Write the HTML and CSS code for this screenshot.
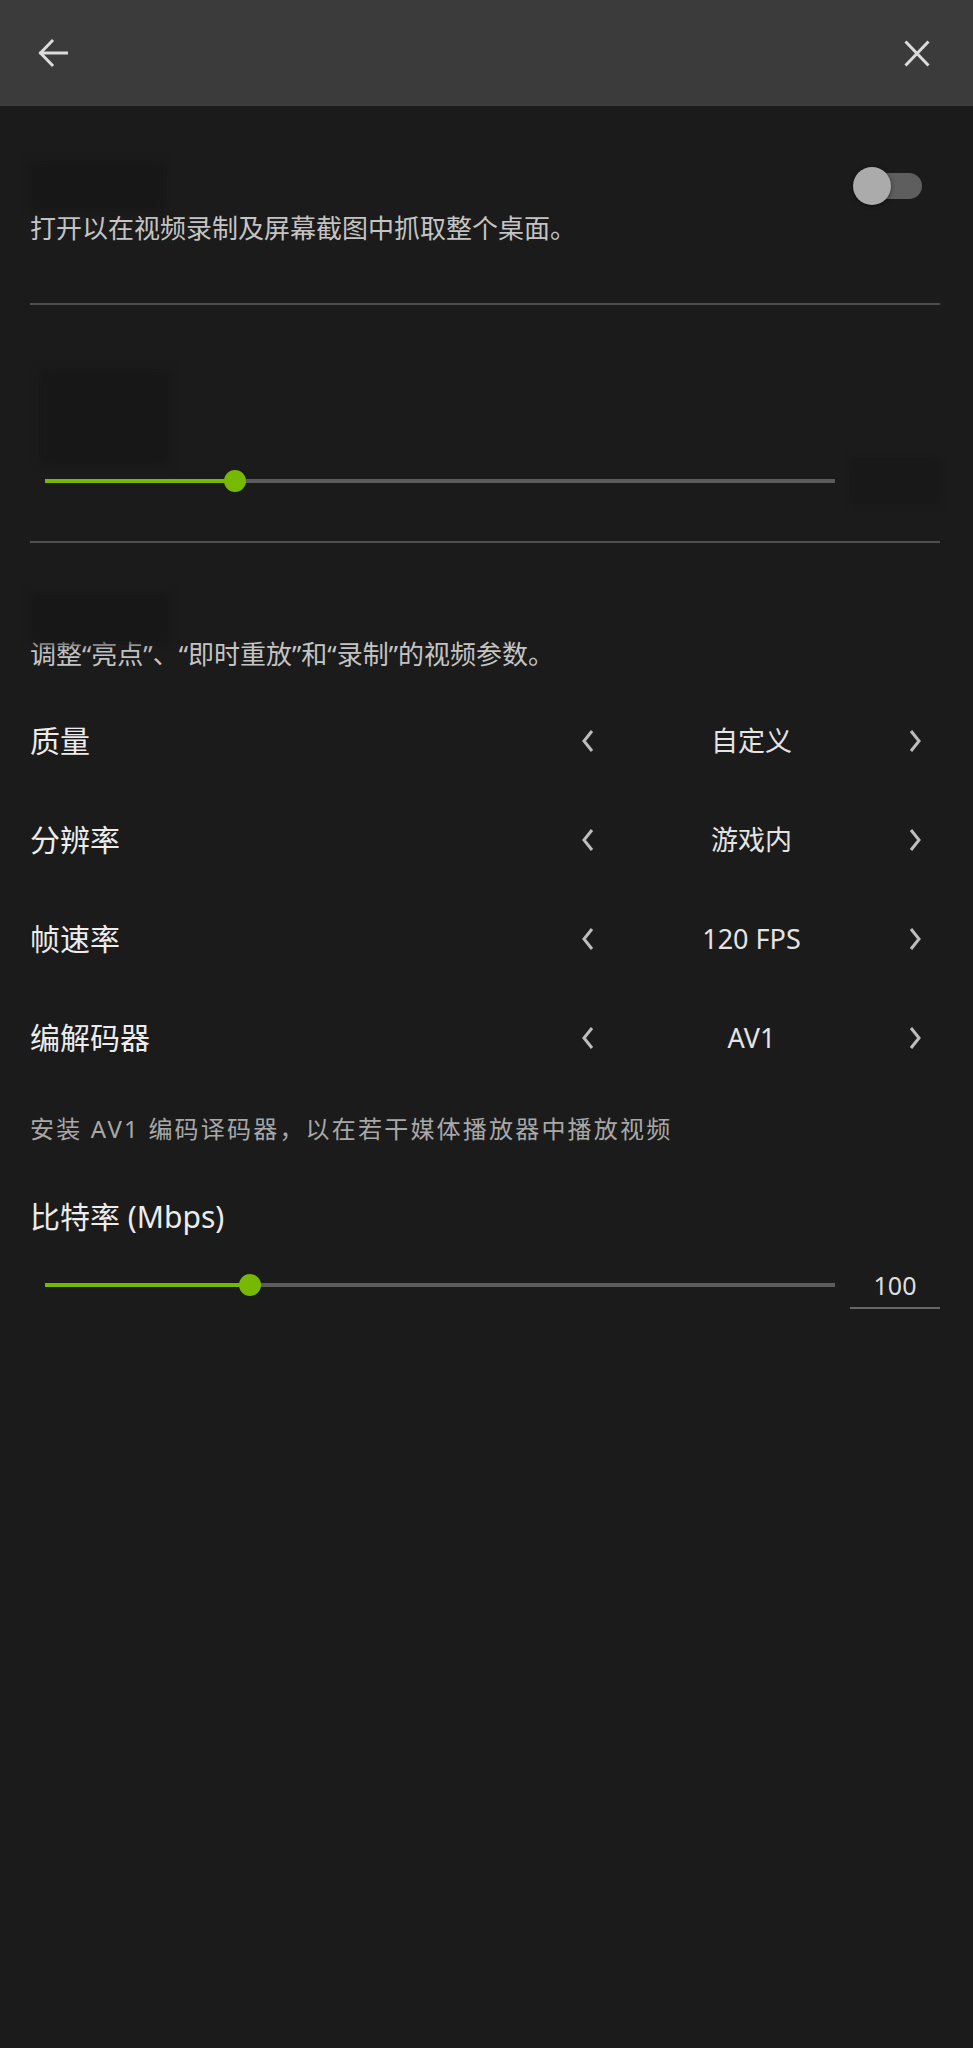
FILE: index.html
```html
<!DOCTYPE html>
<html lang="zh-CN">
  <head>
    <meta charset="UTF-8" />
    <meta name="viewport" content="width=device-width, initial-scale=1.0" />
    <title>视频捕获</title>
    <link rel="stylesheet" href="styles.css">
  </head>
  <body>
    <!-- header -->
    <div id="header">
      <button class="icon-btn" aria-label="返回">
        <svg width="30" height="30" viewBox="0 0 30 30" fill="none" stroke="#dcdcdc" stroke-width="3" stroke-linecap="square">
          <path d="M29 15H3" />
          <path d="M14 3L2.5 15L14 27" />
        </svg>
      </button>
      <button class="icon-btn" aria-label="关闭">
        <svg width="26" height="27" viewBox="0 0 26 27" fill="none" stroke="#dcdcdc" stroke-width="3">
          <path d="M1.5 1.5L24.5 25.5" />
          <path d="M24.5 1.5L1.5 25.5" />
        </svg>
      </button>
    </div>

    <!-- desktop capture -->
    <div class="section" id="desktop">
      <div class="toggle-row">
        <div class="redacted title-block"></div>
        <div class="toggle">
          <div class="toggle-knob"></div>
        </div>
      </div>
      <p class="desc">打开以在视频录制及屏幕截图中抓取整个桌面。</p>
    </div>
    <div class="divider"></div>

    <!-- hidden slider section -->
    <div class="section" id="length">
      <div class="redacted big-block"></div>
      <div class="slider-row">
        <div class="slider">
          <div class="slider-fill" style="width: 24%"></div>
          <div class="slider-knob"></div>
        </div>
        <div class="value-box redacted-box"></div>
      </div>
    </div>
    <div class="divider"></div>

    <!-- video quality -->
    <div class="section" id="video">
      <div class="redacted title-block small"></div>
      <p class="desc">调整“亮点”、“即时重放”和“录制”的视频参数。</p>

      <div class="option-row">
        <span class="label">质量</span>
        <div class="selector">
          <svg class="chev" width="16" height="24" viewBox="0 0 16 24"><path d="M12 2L4 12L12 22" /></svg>
          <span class="value">自定义</span>
          <svg class="chev" width="16" height="24" viewBox="0 0 16 24"><path d="M4 2L12 12L4 22" /></svg>
        </div>
      </div>
      <div class="option-row">
        <span class="label">分辨率</span>
        <div class="selector">
          <svg class="chev" width="16" height="24" viewBox="0 0 16 24"><path d="M12 2L4 12L12 22" /></svg>
          <span class="value">游戏内</span>
          <svg class="chev" width="16" height="24" viewBox="0 0 16 24"><path d="M4 2L12 12L4 22" /></svg>
        </div>
      </div>
      <div class="option-row">
        <span class="label">帧速率</span>
        <div class="selector">
          <svg class="chev" width="16" height="24" viewBox="0 0 16 24"><path d="M12 2L4 12L12 22" /></svg>
          <span class="value">120 FPS</span>
          <svg class="chev" width="16" height="24" viewBox="0 0 16 24"><path d="M4 2L12 12L4 22" /></svg>
        </div>
      </div>
      <div class="option-row">
        <span class="label">编解码器</span>
        <div class="selector">
          <svg class="chev" width="16" height="24" viewBox="0 0 16 24"><path d="M12 2L4 12L12 22" /></svg>
          <span class="value">AV1</span>
          <svg class="chev" width="16" height="24" viewBox="0 0 16 24"><path d="M4 2L12 12L4 22" /></svg>
        </div>
      </div>

      <p class="note">安装 AV1 编码译码器，以在若干媒体播放器中播放视频</p>

      <div class="label bitrate-label">比特率 (Mbps)</div>
      <div class="slider-row bitrate-row">
        <div class="slider">
          <div class="slider-fill" style="width: 26%"></div>
          <div class="slider-knob"></div>
        </div>
        <div class="value-box">100</div>
      </div>
    </div>
  </body>
</html>
```

FILE: styles.css
```css
body {
  margin: 0;
  background: #1b1b1b;
  color: #e8e8e8;
  font-family: "Noto Sans", "Noto Sans CJK SC", sans-serif;
  min-height: 2048px;
}

p {
  margin: 0;
}

#header {
  height: 106px;
  background: #3b3b3b;
  display: flex;
  align-items: center;
  justify-content: space-between;
  padding: 0 43px 0 38px;
}

.icon-btn {
  background: none;
  border: none;
  padding: 0;
  display: flex;
  cursor: pointer;
}

.section {
  padding: 0 33px 0 30px;
}

.divider {
  height: 2px;
  background: #4f4f4f;
  margin: 0 33px 0 30px;
}

/* blurred-out titles from the capture */
.redacted {
  background: #171717;
  filter: blur(4px);
  border-radius: 4px;
}

.title-block {
  width: 135px;
  height: 48px;
}

.title-block.small {
  width: 140px;
  height: 50px;
}

.big-block {
  width: 130px;
  height: 95px;
  margin: 65px 0 0 10px;
}

.toggle-row {
  display: flex;
  align-items: center;
  justify-content: space-between;
  height: 40px;
  margin-top: 60px;
  padding-right: 18px;
}

.toggle {
  position: relative;
  width: 62px;
  height: 26px;
  border-radius: 13px;
  background: #5e5e5e;
}

.toggle-knob {
  position: absolute;
  left: -7px;
  top: -6px;
  width: 38px;
  height: 38px;
  border-radius: 50%;
  background: #ababab;
  box-shadow: rgba(0, 0, 0, 0.5) 0 1px 4px;
}

.desc {
  font-size: 26px;
  line-height: 32px;
  color: #c4c4c4;
}

#desktop .desc {
  margin-top: 6px;
  padding-bottom: 59px;
}

.slider-row {
  display: flex;
  align-items: center;
  gap: 15px;
  height: 40px;
  padding-left: 15px;
}

#length .slider-row {
  margin: -4px 0 40px;
}

.slider {
  position: relative;
  width: 790px;
  height: 4px;
  background: #5c5c5c;
  display: flex;
  align-items: center;
}

.slider-fill {
  height: 100%;
  background: #76b900;
}

.slider-knob {
  width: 22px;
  height: 22px;
  border-radius: 50%;
  background: #76b900;
  margin-left: -11px;
}

.value-box {
  width: 90px;
  height: 39px;
  box-sizing: border-box;
  text-align: center;
  font-size: 25px;
  line-height: 30px;
  color: #dedede;
  border-bottom: 2px solid #666;
  margin-top: 9px;
}

.redacted-box {
  background: #181818;
  border-bottom: none;
  filter: blur(3px);
  height: 46px;
  margin-top: 0;
}

#video {
  padding-top: 50px;
}

#video .desc {
  margin: -5px 0 21px;
}

.option-row {
  display: flex;
  align-items: center;
  justify-content: space-between;
  height: 99px;
}

.label {
  font-size: 30px;
  line-height: 40px;
  color: #ececec;
}

.selector {
  width: 343px;
  margin-right: 17px;
  display: flex;
  align-items: center;
}

.value {
  flex: 1;
  text-align: center;
  font-size: 27px;
  line-height: 34px;
  color: #e4e4e4;
}

.chev path {
  fill: none;
  stroke: #bdbdbd;
  stroke-width: 3;
}

.note {
  margin-top: 27px;
  font-size: 24px;
  letter-spacing: 2.2px;
  line-height: 30px;
  color: #a8a8a8;
}

.bitrate-label {
  margin-top: 53px;
}

.bitrate-row {
  margin-top: 28px;
}
```
